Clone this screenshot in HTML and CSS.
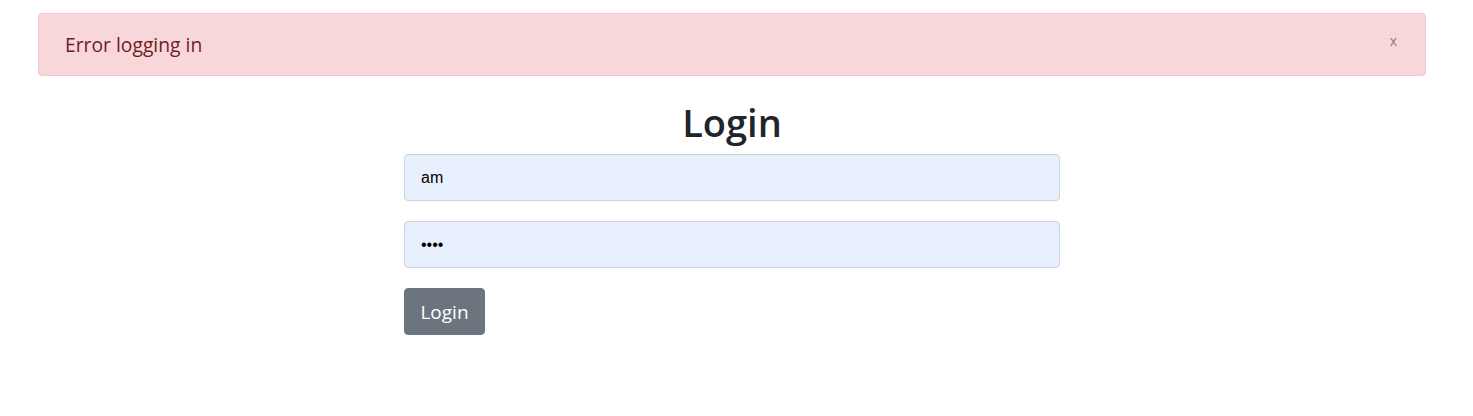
FILE: index.html
```html
<!DOCTYPE html>
<html lang="en">
<head>
<meta charset="utf-8">
<title>Login</title>
<link rel="stylesheet" href="styles.css">
</head>
<body>
<div class="page">
  <div class="alert">
    <span class="alert-text">Error logging in</span>
    <button class="alert-close" type="button">x</button>
  </div>
  <h1 class="title">Login</h1>
  <form class="login-form">
    <input class="field" type="text" value="am">
    <input class="field" type="password" value="abcd">
    <div><button class="btn" type="button">Login</button></div>
  </form>
</div>
</body>
</html>
```

FILE: styles.css
```css
html, body {
  margin: 0;
  padding: 0;
  background: #fff;
}
body {
  font-family: "Open Sans", "Noto Sans", sans-serif;
  color: #212529;
}
.page {
  width: 1464px;
  display: flex;
  flex-direction: column;
  align-items: center;
  padding-top: 13px;
}
.alert {
  box-sizing: border-box;
  width: 1388px;
  height: 63px;
  background: #f8d7da;
  border: 1px solid #f5c6cb;
  border-radius: 4px;
  color: #721c24;
  display: flex;
  align-items: center;
  justify-content: space-between;
  padding: 0 28px 0 26px;
}
.alert-text {
  font-size: 19.3px;
}
.alert-close {
  background: none;
  border: none;
  color: #8a7a7c;
  font-family: "Open Sans", sans-serif;
  font-size: 14px;
  padding: 0;
  margin-top: -8px;
  cursor: pointer;
}
.title {
  margin: 20px 0 0;
  font-size: 38px;
  font-weight: 600;
  line-height: 52px;
}
.login-form {
  width: 656px;
  display: flex;
  flex-direction: column;
  gap: 20px;
  margin-top: 6px;
}
.field {
  box-sizing: border-box;
  width: 100%;
  height: 47px;
  background: #e8f0fe;
  border: 1px solid #ced4da;
  border-radius: 4px;
  padding: 0 16px;
  font-family: "Liberation Sans", Arial, sans-serif;
  font-size: 16px;
  color: #000;
  outline: none;
}
.btn {
  box-sizing: border-box;
  width: 81px;
  height: 47px;
  background: #6c757d;
  border: 1px solid #6c757d;
  border-radius: 4px;
  color: #fff;
  font-family: "Open Sans", sans-serif;
  font-size: 19px;
  padding: 0;
}
```
